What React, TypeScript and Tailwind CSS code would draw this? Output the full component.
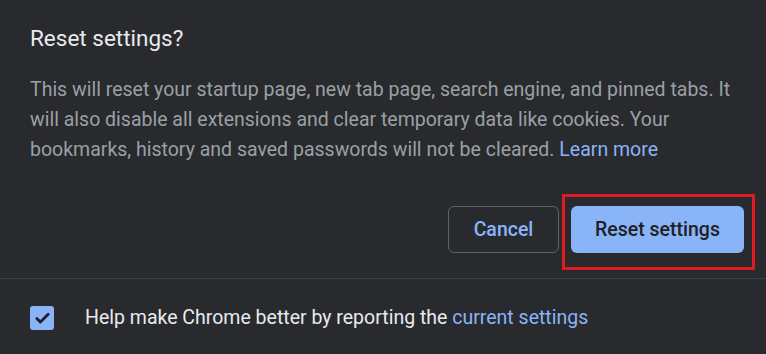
import { Check } from "lucide-react";

export default function App() {
  return (
    <div className="relative h-[354px] w-[766px] overflow-hidden bg-[#292a2d] font-['Roboto',sans-serif]">
      <div className="px-[30px] pt-[24px]">
        <h1 className="text-[22.5px] leading-[28px] text-[#e8eaed]">Reset settings?</h1>
        <p className="mt-[23px] text-[19.5px] leading-[30px] text-[#9aa0a6]">
          This will reset your startup page, new tab page, search engine, and pinned tabs. It will also disable all
          extensions and clear temporary data like cookies. Your bookmarks, history and saved passwords will not be
          cleared. <span className="text-[#8ab4f8]">Learn more</span>
        </p>
      </div>
      <div className="mt-[41px] flex justify-end gap-[12px] pr-[22px]">
        <button className="h-[47px] w-[111px] rounded-[6px] border border-[#5f6368] text-[19.5px] font-medium text-[#8ab4f8]">
          Cancel
        </button>
        <div className="relative">
          <button className="h-[47px] w-[173px] rounded-[6px] bg-[#8ab4f8] text-[19.5px] font-medium text-[#202124]">
            Reset settings
          </button>
          <div className="pointer-events-none absolute -left-[9px] -right-[11px] -top-[12px] -bottom-[17px] border-[3px] border-[#e01b24]" />
        </div>
      </div>
      <div className="mt-[25px] flex h-[76px] items-start gap-[31px] border-t border-[#3c4043] px-[30px] pt-[27px]">
        <span className="flex h-[24px] w-[24px] items-center justify-center rounded-[3px] bg-[#8ab4f8]">
          <Check size={17} strokeWidth={4} className="text-[#202124]" />
        </span>
        <span className="text-[19.5px] leading-[24px] text-[#e8eaed]">
          Help make Chrome better by reporting the <span className="text-[#8ab4f8]">current settings</span>
        </span>
      </div>
    </div>
  );
}
